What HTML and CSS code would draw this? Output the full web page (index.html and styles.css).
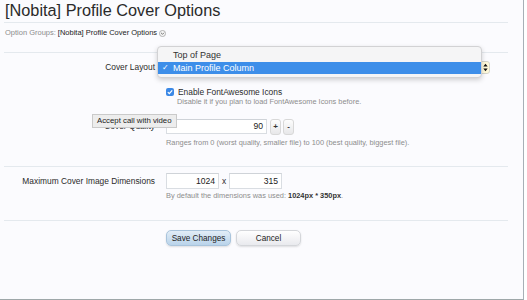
FILE: index.html
```html
<!DOCTYPE html>
<html lang="en">
<head>
    <meta charset="UTF-8">
    <title>[Nobita] Profile Cover Options</title>
    <link rel="stylesheet" href="styles.css">
</head>
<body>
    <div class="page">
        <h1 class="title">[Nobita] Profile Cover Options</h1>
        <div class="breadcrumb">
            <span class="crumb-label">Option Groups:</span>
            <span class="crumb-link">[Nobita] Profile Cover Options</span>
            <span class="crumb-menu">
                <svg width="7" height="7" viewBox="0 0 8 8"><circle cx="4" cy="4" r="3.5" fill="#f4f4f4" stroke="#999" stroke-width="0.8"/><path d="M2.3 3.2 L4 4.9 L5.7 3.2" fill="none" stroke="#555" stroke-width="0.9"/></svg>
            </span>
        </div>

        <form class="options">
            <div class="section">
                <div class="row row-select">
                    <label class="row-label">Cover Layout</label>
                    <div class="row-control">
                        <div class="select">
                            <span class="select-arrows">
                                <svg width="5" height="9" viewBox="0 0 5 9"><path d="M0.3 3.5 L2.5 0.8 L4.7 3.5 Z M0.3 5.5 L2.5 8.2 L4.7 5.5 Z" fill="#111"/></svg>
                            </span>
                        </div>
                        <!-- open popup of the select -->
                        <ul class="select-menu">
                            <li>Top of Page</li>
                            <li class="selected"><span class="tick">✓</span>Main Profile Column</li>
                        </ul>
                    </div>
                </div>

                <div class="row row-check">
                    <div class="row-label"></div>
                    <div class="row-control">
                        <label class="check">
                            <span class="checkbox">
                                <svg width="8" height="8" viewBox="0 0 8 8"><path d="M1.8 4.2 L3.3 5.7 L6.2 2.3" fill="none" stroke="#fff" stroke-width="1.2"/></svg>
                            </span>
                            Enable FontAwesome Icons
                        </label>
                        <p class="hint">Disable it if you plan to load FontAwesome Icons before.</p>
                    </div>
                </div>

                <div class="row row-quality">
                    <label class="row-label">Cover Quality</label>
                    <div class="row-control">
                        <div class="spinner">
                            <span class="text-input quality-input">90</span>
                            <span class="spin-btn">+</span>
                            <span class="spin-btn">-</span>
                        </div>
                        <p class="hint">Ranges from 0 (worst quality, smaller file) to 100 (best quality, biggest file).</p>
                    </div>
                    <div class="tooltip">Accept call with video</div>
                </div>
            </div>

            <div class="section">
                <div class="row row-dims">
                    <label class="row-label">Maximum Cover Image Dimensions</label>
                    <div class="row-control">
                        <div class="dims">
                            <span class="text-input dim-input">1024</span>
                            <span class="dims-x">x</span>
                            <span class="text-input dim-input">315</span>
                        </div>
                        <p class="hint">By default the dimensions was used: <b>1024px * 350px</b>.</p>
                    </div>
                </div>
            </div>

            <div class="actions">
                <button type="button" class="button primary">Save Changes</button>
                <button type="button" class="button">Cancel</button>
            </div>
        </form>
    </div>
</body>
</html>
```

FILE: styles.css
```css
/* General page */
body {
    margin: 0;
    padding: 0;
    background: #fff;
    font-family: "Liberation Sans", Arial, sans-serif;
    color: #2b2b2b;
}

.page {
    width: 523px;
    height: 299px;
    background: #fbfbfe;
    border-right: 1px solid #a7afb6;
    border-bottom: 1px solid #9ea7a9;
    overflow: hidden;
}

/* Heading */
.title {
    margin: 0 15px 0 4px;
    padding-left: 1px;
    height: 22px;
    font-size: 16.3px;
    line-height: 20px;
    font-weight: normal;
    color: #2a2a2a;
    border-bottom: 1px solid #e4e9ee;
}

.breadcrumb {
    margin: 5px 0 14px 5px;
    height: 10px;
    font-size: 7.5px;
    line-height: 10px;
    display: flex;
    align-items: center;
    gap: 2px;
}
.crumb-label {
    color: #8c8c8c;
}
.crumb-link {
    color: #222;
}
.crumb-menu {
    display: flex;
}

/* Form sections */
.options {
    margin: 0 15px 0 4px;
}
.section {
    border-top: 1px solid #e4e9ee;
}
.section:first-child {
    padding-bottom: 18px;
}
.section:nth-child(2) {
    padding-bottom: 19px;
    border-bottom: 1px solid #e4e9ee;
}

.row {
    display: flex;
    position: relative;
}
.row-label {
    width: 151px;
    flex: none;
    margin-right: 11px;
    text-align: right;
    font-size: 8.4px;
    color: #2b2b2b;
}
.row-control {
    position: relative;
    flex: 1;
}

/* Select with open popup */
.row-select {
    margin-top: 8px;
    height: 13px;
    align-items: center;
}
.row-select .row-label {
    line-height: 13px;
}
.select {
    width: 324px;
    height: 13px;
    box-sizing: border-box;
    border: 1px solid #d6d6cc;
    border-radius: 3px;
    background: #fff9d9;
    display: flex;
    justify-content: flex-end;
    align-items: center;
}
.select-arrows {
    display: flex;
    width: 8px;
    justify-content: center;
}
.select-menu {
    position: absolute;
    left: -9px;
    top: -15px;
    width: 325px;
    margin: 0;
    padding: 2px 0 3px;
    box-sizing: border-box;
    list-style: none;
    background: #f5f5f6;
    border: 1px solid #d2d2d4;
    border-radius: 4px;
    box-shadow: 0 2px 5px rgba(0, 0, 0, 0.18);
    font-size: 9px;
}
.select-menu li {
    height: 12px;
    line-height: 12px;
    padding-left: 15px;
    color: #333;
    position: relative;
}
.select-menu li.selected {
    margin-top: 1px;
    background: #3d8ee9;
    color: #fff;
}
.tick {
    position: absolute;
    left: 4px;
    top: 0;
    font-family: "DejaVu Sans", sans-serif;
    font-size: 8px;
}

/* Checkbox row */
.row-check {
    margin-top: 13px;
}
.check {
    display: flex;
    align-items: center;
    height: 10px;
    font-size: 8.4px;
    line-height: 10px;
    color: #2b2b2b;
}
.checkbox {
    width: 8px;
    height: 8px;
    margin: 0 4px 0 0;
    border-radius: 2px;
    background: #3b88e6;
    display: flex;
}
.hint {
    margin: 0;
    font-size: 7.4px;
    line-height: 10px;
    color: #8d8d8d;
}
.row-check .hint {
    padding-left: 11px;
}
.hint b {
    color: #333;
}

/* Quality spinner */
.row-quality {
    margin-top: 11px;
}
.row-quality .row-label {
    line-height: 17px;
}
.spinner {
    display: flex;
    align-items: center;
    height: 17px;
    gap: 2px;
}
.text-input {
    height: 15px;
    box-sizing: border-box;
    border: 1px solid #d9dde2;
    border-top-color: #cfd3d8;
    background: #fff;
    font-size: 8.6px;
    line-height: 13px;
    text-align: right;
    padding-right: 3px;
    color: #222;
}
.quality-input {
    width: 101px;
    margin-right: 1px;
}
.spin-btn {
    width: 11px;
    height: 16px;
    box-sizing: border-box;
    border: 1px solid #d8d8d8;
    border-radius: 3px;
    background: linear-gradient(#fdfdfd, #e7e7e9);
    font-size: 8px;
    font-weight: bold;
    line-height: 14px;
    text-align: center;
    color: #333;
}
.row-quality .hint {
    margin-top: 3px;
}

.tooltip {
    position: absolute;
    left: 88px;
    top: -4px;
    height: 14px;
    padding: 0 4px;
    box-sizing: border-box;
    background: #ededed;
    border: 1px solid #cacaca;
    font-size: 7.8px;
    line-height: 12px;
    color: #222;
    white-space: nowrap;
}

/* Dimensions */
.row-dims {
    margin-top: 6px;
}
.row-dims .row-label {
    line-height: 16px;
}
.dims {
    display: flex;
    align-items: center;
    height: 16px;
}
.dim-input {
    width: 53px;
    height: 16px;
    line-height: 14px;
}
.dims-x {
    width: 10px;
    text-align: center;
    font-size: 8.4px;
}
.row-dims .hint {
    margin-top: 2px;
}

/* Buttons */
.actions {
    padding: 9px 0 0 162px;
    display: flex;
    gap: 5px;
}
.button {
    width: 65px;
    height: 16px;
    padding: 0;
    border: 1px solid #d4d6da;
    border-radius: 5px;
    background: linear-gradient(#ffffff, #e9eaee);
    box-shadow: 0 1px 2px rgba(0, 0, 0, 0.12);
    font-family: "Liberation Sans", Arial, sans-serif;
    font-size: 8.2px;
    color: #222;
    cursor: pointer;
}
.button.primary {
    border-color: #a9c4dc;
    background: linear-gradient(#e2edf7, #b9d3ea);
}
```
